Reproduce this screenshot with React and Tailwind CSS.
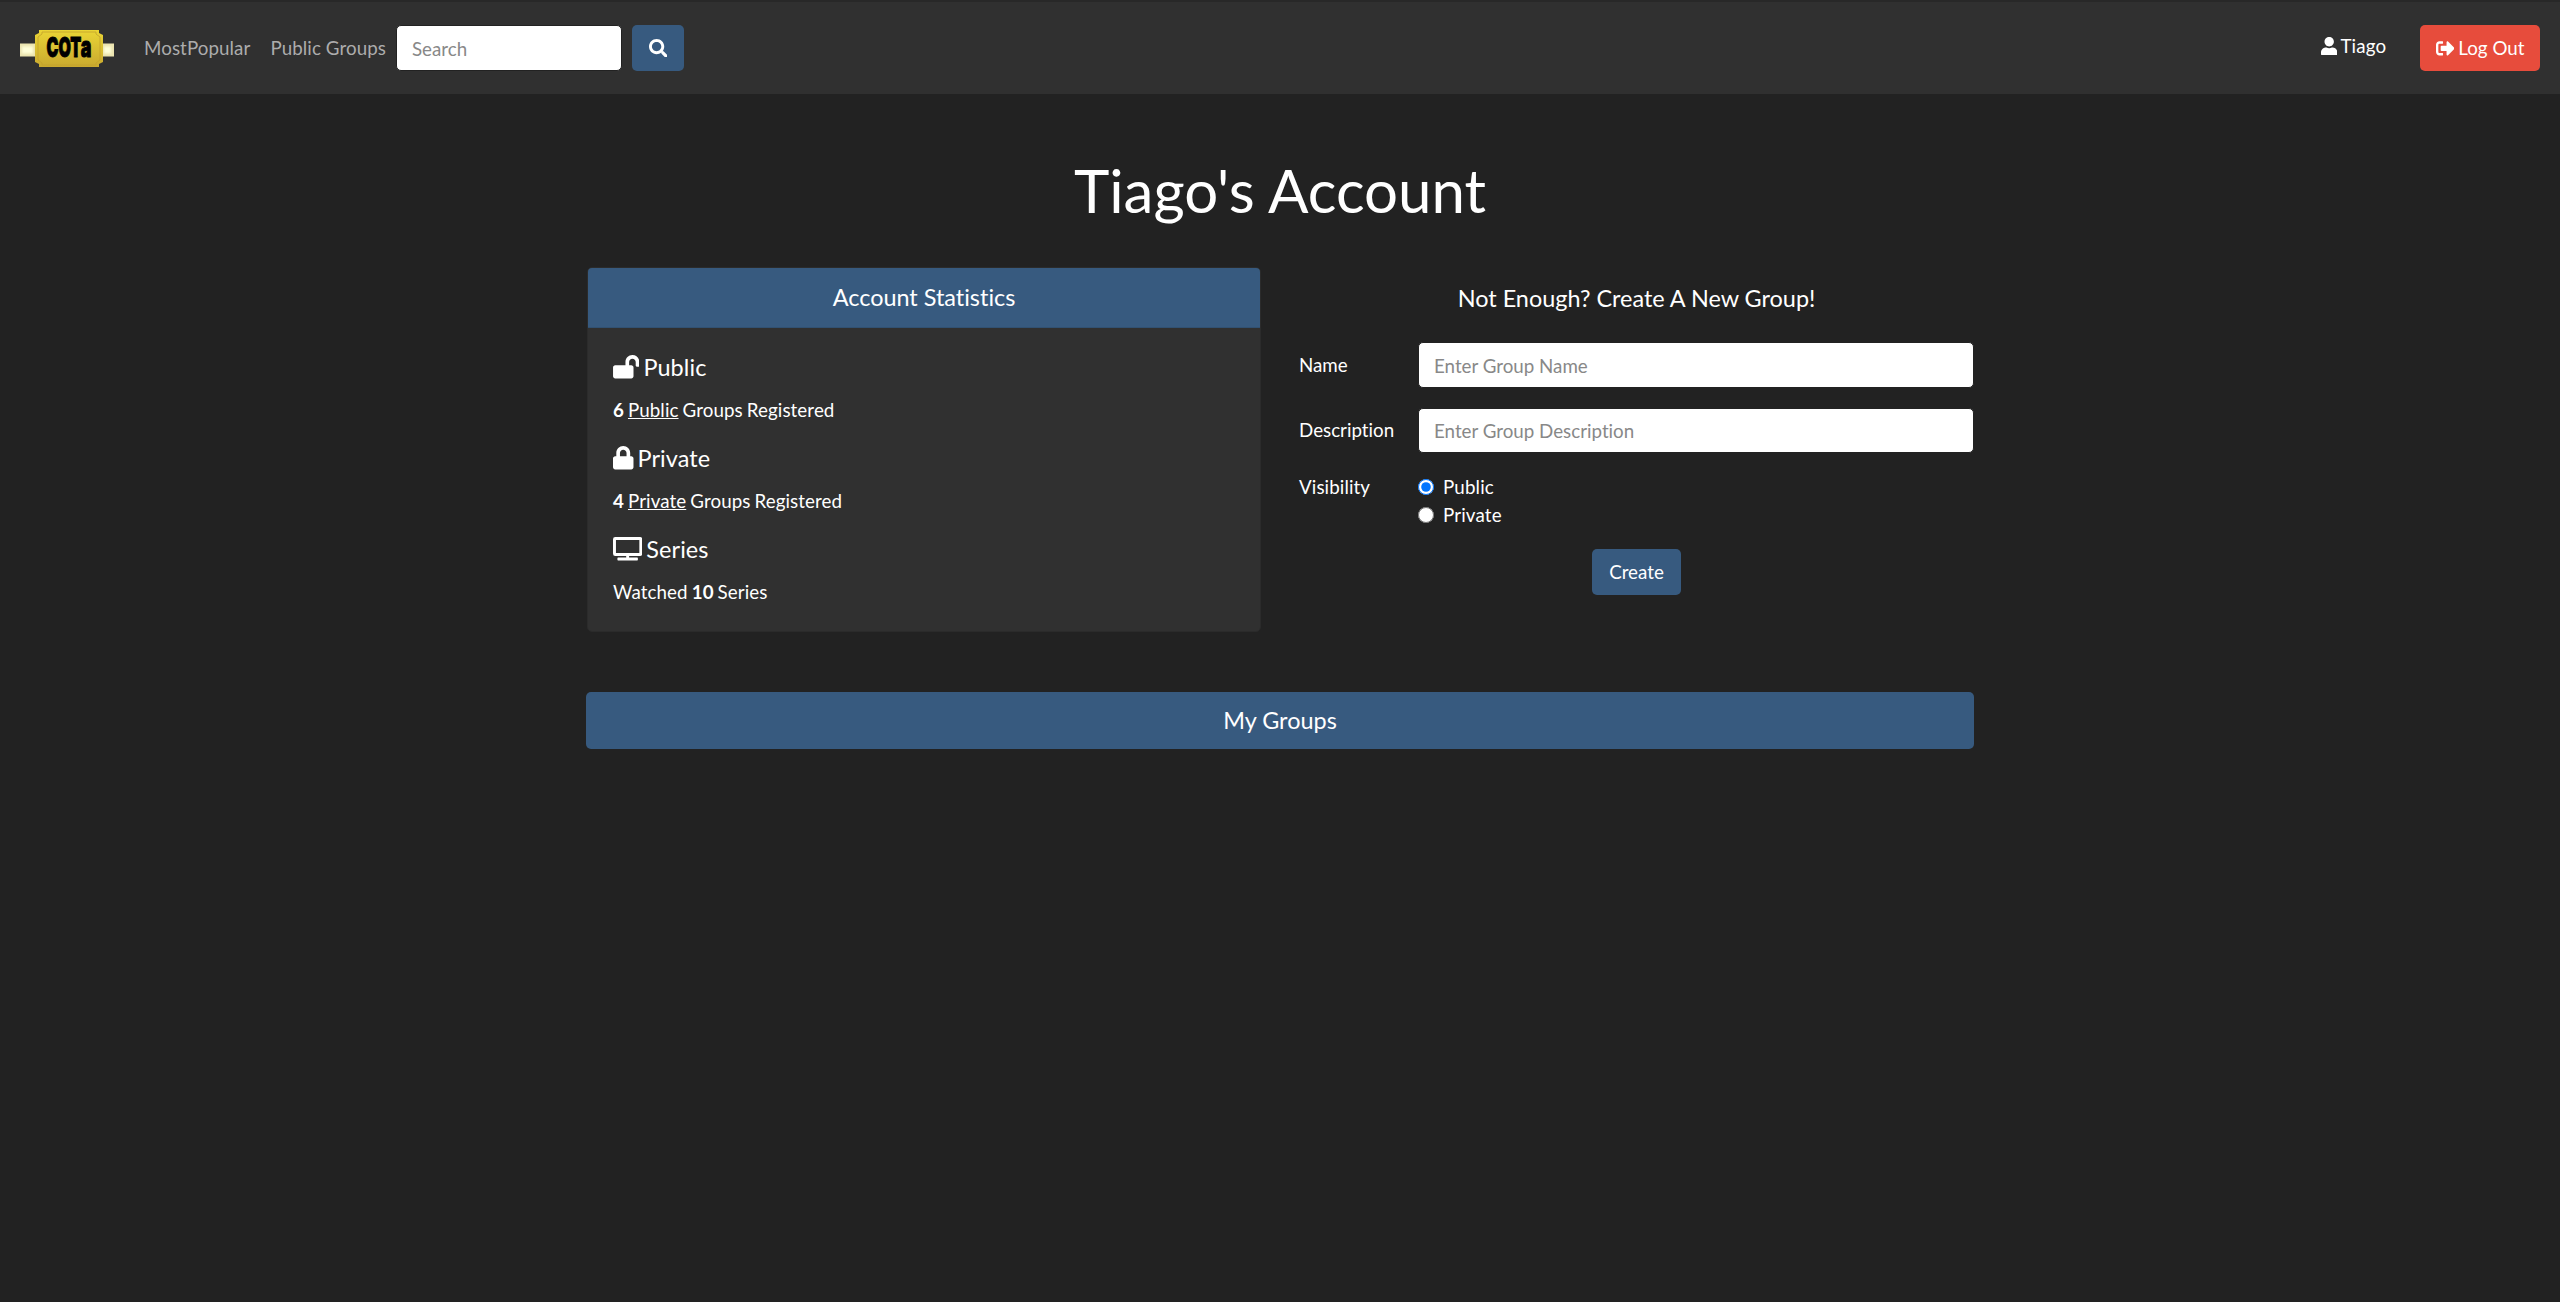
import { FaSearch, FaUser, FaSignOutAlt, FaLockOpen, FaLock, FaTv } from "react-icons/fa";

function Logo() {
  return (
    <svg className="mt-px" width="94" height="37" viewBox="0 0 94 37" role="img" aria-label="COTa">
      <defs>
        <linearGradient id="gold" x1="0" y1="0" x2="0" y2="1">
          <stop offset="0" stopColor="#ead535" />
          <stop offset="1" stopColor="#c9a92f" />
        </linearGradient>
        <filter id="glow" x="-20%" y="-20%" width="140%" height="140%">
          <feGaussianBlur stdDeviation="0.8" />
        </filter>
      </defs>
      <rect x="0" y="13.5" width="94" height="13" fill="#ebe4b0" />
      <rect x="2" y="16.5" width="11" height="7" fill="#ffffd8" filter="url(#glow)" />
      <rect x="84" y="16.5" width="7" height="7" fill="#ffffd8" filter="url(#glow)" />
      <path d="M19 0H79V3L83 5V32L79 34V37H19V34L15 32V5L19 3Z" fill="url(#gold)" />
      <path d="M22 2H76V4L80 7V30L76 33V35H22V33L18 30V7L22 4Z" fill="none" stroke="#c3a12b" strokeWidth="0.8" />
      <g transform="translate(26.6 27.4) scale(0.56 1)" className="font-['Inter',sans-serif] text-[27.5px] font-black" stroke="#000" strokeWidth="1">
        <text textLength="62" lengthAdjust="spacingAndGlyphs">COT</text>
        <text x="61" textLength="19" lengthAdjust="spacingAndGlyphs" className="text-[29px]">a</text>
      </g>
    </svg>
  );
}

function Stat({ icon: Icon, iconClass, title, children }) {
  return (
    <div className="mb-[19px] h-[72px] last:mb-0">
      <h5 className="mb-[15px] flex h-[28px] items-center gap-1 text-[23.4375px] leading-[28px]">
        <Icon className={iconClass} />
        <span className="tracking-[0.1px]">{title}</span>
      </h5>
      <p className="leading-[28px] tracking-[0.09px] [word-spacing:-0.9px]">{children}</p>
    </div>
  );
}

const field =
  "block w-[556px] rounded-[5px] border border-[#222] bg-white px-[15px] text-[18.75px] text-[#444] placeholder:text-[#888] placeholder:opacity-100 outline-none";

function Radio({ label, checked }) {
  return (
    <label className="flex h-[28px] items-center gap-[9px]">
      <input type="radio" name="visibility" defaultChecked={checked} className="h-4 w-4" />
      <span className="tracking-[0.15px]">{label}</span>
    </label>
  );
}

export default function App() {
  return (
    <div className="min-h-[1302px] bg-[#222] font-['Lato',sans-serif] text-[18.75px] leading-[28px] text-white [font-variant-ligatures:none]">
      <nav className="flex h-[94px] items-center border-t-2 border-[#282828] bg-[#303030] px-5">
        <Logo />
        <div className="ml-[30px] flex w-[242px] justify-between whitespace-nowrap tracking-[0.08px] text-[#acacac]">
          <a>MostPopular</a>
          <a>Public Groups</a>
        </div>
        <input placeholder="Search" className="ml-[10px] h-[46px] w-[226px] rounded-[5px] border border-[#222] bg-white px-[15px] text-[18.75px] placeholder:text-[#888] placeholder:opacity-100" />
        <button className="ml-[10px] flex h-[46px] w-[52px] items-center justify-center rounded-[5px] bg-[#375a7f]">
          <FaSearch />
        </button>
        <span className="mb-1 ml-auto mr-[33px] flex w-[66px] items-center gap-[3px] tracking-[0.15px]">
          <FaUser className="h-[18.75px] w-[16.4px]" />
          Tiago
        </span>
        <button className="flex h-[46px] w-[120px] items-center justify-center gap-1 rounded-[5px] bg-[#e74c3c]">
          <FaSignOutAlt />
          Log Out
        </button>
      </nav>
      <main className="mx-auto w-[1388px]">
        <h1 className="mt-[60px] text-center text-[60px] leading-[72px]">Tiago's Account</h1>
        <div className="mt-[41px] flex h-[365px]">
          <section className="ml-px w-[674px] overflow-hidden rounded-[5px] border border-[#2b2b2b] bg-[#303030]">
            <h5 className="h-[60px] border-b border-[#315172] bg-[#375a7f] pt-[15px] text-center text-[23.4375px] leading-[28px]">Account Statistics</h5>
            <div className="px-[25px] pt-[25px]">
              <Stat icon={FaLockOpen} iconClass="h-[23.4px] w-[26.4px]" title="Public">
                <b>6</b> <u>Public</u> Groups Registered
              </Stat>
              <Stat icon={FaLock} iconClass="h-[23.4px] w-[20.5px]" title="Private">
                <b>4</b> <u>Private</u> Groups Registered
              </Stat>
              <Stat icon={FaTv} iconClass="h-[23.4px] w-[29.3px]" title="Series">
                Watched <b>10</b> Series
              </Stat>
            </div>
          </section>
          <form className="ml-[38px] w-[675px]">
            <h5 className="mt-[17px] text-center text-[23.4375px] leading-[28px]">Not Enough? Create A New Group!</h5>
            <div className="mt-[30px] flex h-[46px] items-center justify-between">
              <label>Name</label>
              <input placeholder="Enter Group Name" className={`${field} h-[46px]`} />
            </div>
            <div className="mt-[20px] flex h-[45px] items-center justify-between">
              <label className="mb-px">Description</label>
              <input placeholder="Enter Group Description" className={`${field} h-[45px]`} />
            </div>
            <div className="mt-[20px] flex">
              <span className="w-[119px] tracking-[0.1px]">Visibility</span>
              <div>
                <Radio label="Public" checked />
                <Radio label="Private" />
              </div>
            </div>
            <button type="button" className="mx-auto mt-[20px] block h-[46px] w-[89px] rounded-[5px] bg-[#375a7f]">Create</button>
          </form>
        </div>
        <h5 className="mt-[60px] h-[57px] rounded-[5px] bg-[#375a7f] text-center text-[23.4375px] leading-[56px]">My Groups</h5>
      </main>
    </div>
  );
}
